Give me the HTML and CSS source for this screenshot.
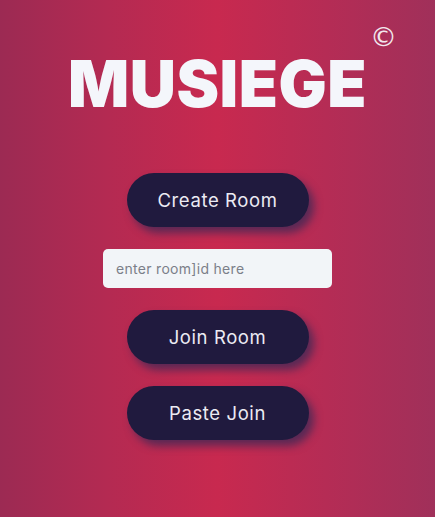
FILE: index.html
```html
<!DOCTYPE html>
<html>
<head>
<meta charset="utf-8">
<link rel="stylesheet" href="styles.css">
</head>
<body>
<main class="page">
  <header class="brand">
    <h1 class="title">MUSIEGE</h1>
    <span class="copy">&copy;</span>
  </header>
  <div class="actions">
    <button class="btn">Create Room</button>
    <input class="room-input" type="text" placeholder="enter room]id here">
    <button class="btn">Join Room</button>
    <button class="btn">Paste Join</button>
  </div>
</main>
</body>
</html>
```
FILE: styles.css
```css
html, body {
  margin: 0;
  padding: 0;
}
body {
  width: 435px;
  height: 517px;
  overflow: hidden;
  background: linear-gradient(90deg, #9c2a53 0%, #b42a52 25%, #c8294f 50%, #b52c55 75%, #a0305a 100%);
  font-family: "Inter", "Open Sans", sans-serif;
}
.page {
  display: flex;
  flex-direction: column;
  align-items: center;
}
.brand {
  position: relative;
  padding-top: 48px;
}
.title {
  margin: 0;
  font-family: "Inter", "DejaVu Sans", sans-serif;
  font-weight: 900;
  font-size: 64px;
  line-height: 72px;
  color: #f4f6fb;
  letter-spacing: 0.5px;
}
.copy {
  position: absolute;
  right: -30px;
  top: 23px;
  font-family: "DejaVu Sans", sans-serif;
  font-size: 27px;
  line-height: 27px;
  color: #f2e8ee;
}
.actions {
  margin-top: 53px;
  display: flex;
  flex-direction: column;
  align-items: center;
  gap: 22px;
}
.btn {
  width: 182px;
  height: 54px;
  border: none;
  border-radius: 27px;
  background: #201a3e;
  color: #ecebf3;
  font-family: "Inter", sans-serif;
  font-size: 18.5px;
  letter-spacing: 0.6px;
  font-weight: 400;
  box-shadow: 5px 6px 9px rgba(45, 40, 85, 0.7);
}
.room-input {
  box-sizing: border-box;
  width: 229px;
  height: 39px;
  border: none;
  border-radius: 5px;
  background: #f2f5f8;
  padding: 0 13px;
  font-family: "Inter", sans-serif;
  font-size: 14px;
  letter-spacing: 0.3px;
  color: #333;
  outline: none;
}
.room-input::placeholder {
  color: #7b7f89;
}
```
